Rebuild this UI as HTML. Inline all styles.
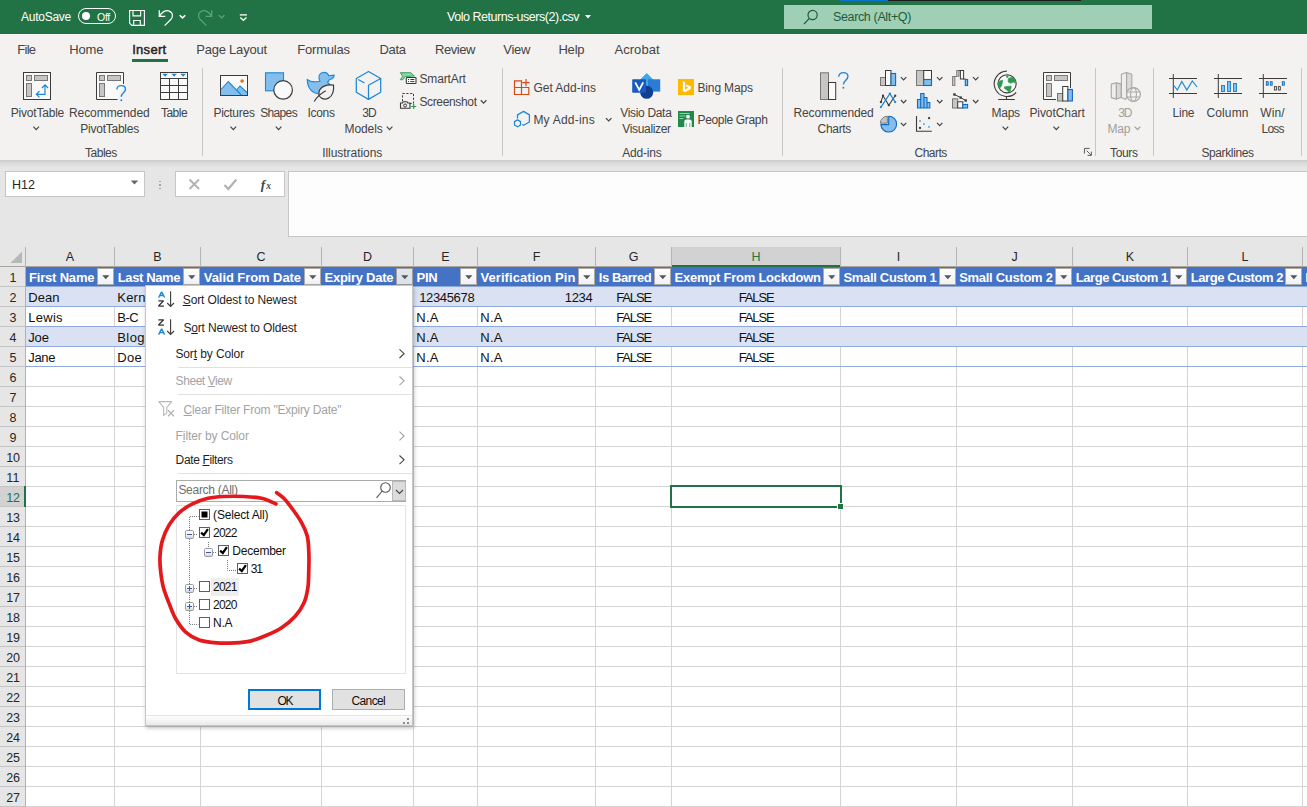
<!DOCTYPE html>
<html><head><meta charset="utf-8"><title>Excel</title>
<style>
html,body{margin:0;padding:0;background:#fff;}
#r{position:relative;width:1307px;height:807px;overflow:hidden;background:#fff;font-family:"Liberation Sans", sans-serif;}
#r div,#r span,#r svg{position:absolute;}
#r span{white-space:pre;}
#r u{text-decoration:underline;text-underline-offset:1px;}
</style></head><body><div id="r">
<div style="left:0px;top:0px;width:1307px;height:34px;background:#217346;"></div>
<div style="left:0px;top:34px;width:1307px;height:127px;background:#f3f2f1;"></div>
<div style="left:0px;top:33px;width:1307px;height:1px;background:#1f6e42;"></div>
<div style="left:0px;top:34px;width:1307px;height:1px;background:#fbfbfa;"></div>
<div style="left:0px;top:160px;width:1307px;height:87px;background:#e6e6e6;"></div>
<div style="left:0px;top:160px;width:1307px;height:8px;background:linear-gradient(#cccbca,#dbdbdb 40%,#e6e6e6);"></div>
<div style="left:840px;top:0px;width:48px;height:1px;background:#0a74cc;"></div>
<div style="left:888px;top:0px;width:193px;height:1px;background:#1c1c1c;"></div>
<span style="left:21.00px;top:9.44px;font-size:12px;line-height:16px;color:#fff;letter-spacing:-0.256px;">AutoSave</span>
<div style="left:78px;top:8px;width:38px;height:16px;border:1px solid #fff;box-sizing:border-box;border-radius:8px;"></div>
<div style="left:82px;top:12px;width:8px;height:8px;background:#fff;border-radius:4px;"></div>
<span style="left:97.00px;top:9.67px;font-size:10.5px;line-height:14.5px;color:#fff;letter-spacing:-0.271px;">Off</span>
<svg style="left:120px;top:0" width="140" height="34" viewBox="120 0 140 34"><g fill="none" stroke="#fff" stroke-width="1.150"><path d="M129.600 10.500h14.800v14.800h-12.600l-2.200-2.200z"/><path d="M133 10.500v5.300h7.600v-5.300"/><path d="M133.700 25.300v-4.800h6.600v4.800"/></g><g fill="none" stroke="#fff" stroke-width="1.250"><path d="M159.300 10.300v6.100h6"/><path d="M159.600 16.100C161.500 12.300 165.500 9.700 169.300 11.100c3.400 1.300 4.300 5 1.700 8.200L164.600 25.600"/></g><path d="M179.700 15.300l2.800 2.600 2.800-2.600" fill="none" stroke="#fff" stroke-width="1.500"/><g fill="none" stroke="#5f9f7d" stroke-width="1.250"><path d="M211.700 10.300v6.100h-6"/><path d="M211.400 16.100C209.500 12.300 205.500 9.700 201.700 11.100c-3.400 1.300-4.300 5-1.700 8.200L206.400 25.600"/></g><path d="M218.900 15.300l2.800 2.600 2.800-2.600" fill="none" stroke="#5f9f7d" stroke-width="1.400"/><path d="M239.800 14.900h7.200" stroke="#fff" stroke-width="1.300"/><path d="M240.300 17.500l3.100 2.700 3.100-2.700" fill="none" stroke="#fff" stroke-width="1.400"/></svg>
<span style="left:447.00px;top:8.99px;font-size:12.5px;line-height:16.5px;color:#fff;letter-spacing:-0.472px;">Volo Returns-users(2).csv</span>
<svg style="left:584px;top:14px;" width="8" height="5" viewBox="0 0 8 5"><path d="M1 1h6l-3 3.4z" fill="#fff"/></svg>
<div style="left:784px;top:5px;width:368px;height:24px;background:#9fcfb5;"></div>
<svg style="left:803px;top:9px;" width="16" height="16" viewBox="0 0 16 16"><g fill="none" stroke="#1e5c3a" stroke-width="1.2"><circle cx="9.6" cy="6" r="4.6"/><path d="M6.4 9.4L1 15"/></g></svg>
<span style="left:833.00px;top:9.19px;font-size:12.5px;line-height:16.5px;color:#1e5c3a;letter-spacing:-0.358px;">Search (Alt+Q)</span>
<span style="left:17.20px;top:41.25px;font-size:13px;line-height:17px;color:#444;letter-spacing:-0.688px;">File</span>
<span style="left:69.20px;top:41.25px;font-size:13px;line-height:17px;color:#444;letter-spacing:-0.097px;">Home</span>
<span style="left:196.20px;top:41.25px;font-size:13px;line-height:17px;color:#444;letter-spacing:-0.211px;">Page Layout</span>
<span style="left:297.30px;top:41.25px;font-size:13px;line-height:17px;color:#444;letter-spacing:-0.223px;">Formulas</span>
<span style="left:379.40px;top:41.25px;font-size:13px;line-height:17px;color:#444;letter-spacing:-0.292px;">Data</span>
<span style="left:435.10px;top:41.25px;font-size:13px;line-height:17px;color:#444;letter-spacing:-0.471px;">Review</span>
<span style="left:503.30px;top:41.25px;font-size:13px;line-height:17px;color:#444;letter-spacing:-0.313px;">View</span>
<span style="left:558.40px;top:41.25px;font-size:13px;line-height:17px;color:#444;letter-spacing:-0.188px;">Help</span>
<span style="left:614.40px;top:41.25px;font-size:13px;line-height:17px;color:#444;letter-spacing:0.070px;">Acrobat</span>
<span style="left:132.20px;top:41.25px;font-size:13px;line-height:17px;color:#252525;letter-spacing:0.297px;-webkit-text-stroke:0.45px #252525;">Insert</span>
<div style="left:132px;top:59px;width:36px;height:3px;background:#217346;"></div>
<div style="left:202px;top:68px;width:1px;height:88px;background:#c8c6c4;"></div>
<div style="left:502px;top:68px;width:1px;height:88px;background:#c8c6c4;"></div>
<div style="left:782px;top:68px;width:1px;height:88px;background:#c8c6c4;"></div>
<div style="left:1095px;top:68px;width:1px;height:88px;background:#c8c6c4;"></div>
<div style="left:1153px;top:68px;width:1px;height:88px;background:#c8c6c4;"></div>
<div style="left:1301px;top:68px;width:1px;height:88px;background:#c8c6c4;"></div>
<svg style="left:0;top:64px" width="1307" height="100" viewBox="0 64 1307 100"><rect x="23.5" y="72.5" width="27" height="27" fill="#fafafa" stroke="#3b3b3b" stroke-width="1"/><rect x="26.5" y="75.5" width="5" height="5" fill="#c8c6c4" stroke="#797775" stroke-width="1"/><rect x="34.5" y="75.5" width="13" height="5" fill="#c8c6c4" stroke="#797775" stroke-width="1"/><rect x="26.5" y="83.5" width="5" height="13" fill="#c8c6c4" stroke="#797775" stroke-width="1"/><path d="M36.3 94.3H45V84.8M39.5 91.2L36.3 94.3L39.5 97.4M41.9 88L45 84.8L48.1 88" fill="none" stroke="#1e88d4" stroke-width="1.2"/><path d="M33.40 126.65L36.20 129.55L39.00 126.65" fill="none" stroke="#444" stroke-width="1.2"/><path d="M117.5 99.5H96.5V72.5H123.5V84" fill="#fafafa" stroke="#3b3b3b" stroke-width="1"/><rect x="99.5" y="75.5" width="5" height="5" fill="#c8c6c4" stroke="#797775" stroke-width="1"/><rect x="107.5" y="75.5" width="13" height="5" fill="#c8c6c4" stroke="#797775" stroke-width="1"/><rect x="99.5" y="83.5" width="5" height="13" fill="#c8c6c4" stroke="#797775" stroke-width="1"/><path d="M116.8 89.5c.2-2.6 2.2-3.9 4.4-3.9 2.5 0 4.3 1.5 4.3 3.7 0 3.2-4.2 3.6-4.2 7.4" fill="none" stroke="#1e88d4" stroke-width="1.4"/><circle cx="121.3" cy="100.2" r="1" fill="#1e88d4"/><rect x="160.5" y="72.5" width="27" height="27" fill="#fafafa" stroke="#3b3b3b"/><path d="M160.5 78.5h27M160.5 85.5h27M160.5 92.5h27M169.5 78.5v21M178.5 78.5v21" stroke="#3b3b3b" fill="none"/><path d="M162.300 73.800h5.600l-2.800 3zM171.300 73.800h5.600l-2.800 3zM180.300 73.800h5.600l-2.800 3z" fill="#1e88d4"/><rect x="220.5" y="75.5" width="27" height="20" fill="#fafafa" stroke="#3b3b3b"/><path d="M221 89.5L228.3 81.5L236.5 90L240 86L247 92.5V95H221z" fill="#83beec"/><path d="M221 89.5L228.3 81.5L241.3 95M236.5 90L240 86L247 92.5" fill="none" stroke="#1e88d4" stroke-width="1.1"/><circle cx="242.1" cy="81" r="1.8" fill="#e8710a"/><path d="M230.50 126.65L233.30 129.55L236.10 126.65" fill="none" stroke="#444" stroke-width="1.2"/><rect x="265.5" y="72.8" width="18" height="18" fill="#83beec" stroke="#1e88d4" stroke-width="1.1"/><circle cx="283.1" cy="89.9" r="9.3" fill="#fafafa" stroke="#3b3b3b" stroke-width="1.2"/><path d="M275.80 126.65L278.60 129.55L281.40 126.65" fill="none" stroke="#444" stroke-width="1.2"/><path d="M307.200 79.300C309.500 81.500 314.500 82.300 320 81.200C319.300 80.100 319 78.800 319 77.300A5 5 0 0 1 328.700 75.700L334.200 75.100C334.100 77.700 332.500 79.300 329.300 79.700C328.900 80.700 328.300 81.500 327.500 82.200C329.500 83.500 330.600 85.500 330.600 87.500C330.600 91.500 326.500 93.900 320.500 93.900C312.500 93.900 307.300 88.500 307.200 79.300z" fill="#83beec" stroke="#1e88d4" stroke-width="1.100" stroke-linejoin="round"/><path d="M333.500 85.100c-5.500-.6-11.200 1-13.600 4.600c-2.300 3.500-.8 7.300 2.100 8.700c4.200 2 9.400-.8 10.900-5.800c.8-2.500 .9-5 .6-7.500z" fill="#f3f2f1" stroke="#3b3b3b" stroke-width="1.200"/><path d="M314.200 101.500c2.500-4.300 6.300-8 11.600-10.800" fill="none" stroke="#3b3b3b" stroke-width="1.200"/><path d="M368.5 71.5L380.7 78.5V92.3L368.5 99.400L356.300 92.300V78.500zM368.500 99.400V85.300L380.700 78.500M364.500 83L358.200 79.500" fill="none" stroke="#1e88d4" stroke-width="1.25" stroke-linejoin="round"/><path d="M386.80 126.65L389.60 129.55L392.40 126.65" fill="none" stroke="#444" stroke-width="1.2"/><path d="M400.300 72.700h10.500l3.600 3.400h-3l-.2 .3h-6l-2.300 3.300h-2.600l2.400-3.400z" fill="#8fd3a8" stroke="#2e9a55" stroke-width=".9" stroke-linejoin="round"/><rect x="406.300" y="77.500" width="9.700" height="6" rx=".8" fill="#fafafa" stroke="#3b3b3b" stroke-width="1.1"/><path d="M408 79.500h1M410.300 79.500h4M408 81.600h1M410.300 81.600h4" stroke="#3b3b3b" stroke-width="1"/><rect x="402.500" y="93.500" width="11" height="10" fill="none" stroke="#3b3b3b" stroke-width="1" stroke-dasharray="2.200 1.600"/><path d="M400.500 103h2l.8-1.200h3.600l.8 1.200h2.300v5.300h-9.500z" fill="#f3f2f1" stroke="#3b3b3b" stroke-width="1.100"/><circle cx="405.100" cy="105.500" r="1.500" fill="none" stroke="#3b3b3b" stroke-width="1"/><path d="M411.200 106.500h5M413.700 104v5" stroke="#2a9a4a" stroke-width="1.200"/><path d="M480.80 100.25L483.60 103.15L486.40 100.25" fill="none" stroke="#444" stroke-width="1.2"/><path d="M514.500 80.800h7v13.700h-7zM514.500 87.500h14.300v7h-7.300" fill="none" stroke="#d64a17" stroke-width="1.200"/><path d="M522.300 82.700h7.300M526 79v7.300" stroke="#d64a17" stroke-width="1.200"/><path d="M517.500 118.600V114.900L523.600 111.400L529.400 114.900V122L523.600 125.300L522.200 124.500" fill="none" stroke="#1e88d4" stroke-width="1.250" stroke-linejoin="round"/><path d="M517.500 119.900l3 1.750v3.400l-3 1.750l-3-1.750v-3.400z" fill="none" stroke="#1e88d4" stroke-width="1.250" stroke-linejoin="round"/><path d="M605.90 118.05L608.70 120.95L611.50 118.05" fill="none" stroke="#444" stroke-width="1.2"/><path d="M646.700 73l8 8-8 8-8-8z" fill="#41a5ee"/><rect x="648" y="79.300" width="12.200" height="12.300" fill="#2b7cd3"/><circle cx="646.700" cy="92.300" r="6.500" fill="#103f91"/><rect x="632.200" y="79.300" width="13.800" height="13.500" rx=".8" fill="#185abd"/><path d="M635.200 82.300l4 7.600 4-7.600" fill="none" stroke="#fff" stroke-width="1.800" stroke-linejoin="miter"/><rect x="678" y="79" width="16" height="16" fill="#ffb900"/><path d="M682.800 81.200l2.300 .8v7.600l3.200-1.900-1.600-.7-1-2.500 5.100 1.800v2.600l-5.700 3.300-2.300-1.300z" fill="#fff"/><rect x="678" y="111" width="16" height="16" fill="#1f8a4c"/><path d="M679.500 113.500h10M679.500 116h6M679.500 118.500h4" stroke="#8fd0a8" stroke-width="1.200"/><circle cx="688" cy="116.700" r="1.900" fill="#fff"/><path d="M684.300 127v-5.300c0-1.300 1-2.200 2.200-2.200h3c1.200 0 2.200 .9 2.200 2.200V127z" fill="#fff"/><path d="M686.200 127v-4M689.800 127v-4" stroke="#1f8a4c" stroke-width=".7"/><rect x="820.500" y="72.800" width="8" height="26.700" fill="#c8c6c4" stroke="#797775"/><rect x="828.500" y="82.500" width="7.200" height="17" fill="#fafafa" stroke="#3b3b3b"/><path d="M838.700 76.800c.3-2.800 2.300-4.200 4.700-4.200 2.700 0 4.500 1.600 4.500 3.900 0 3.500-4.500 4-4.500 8" fill="none" stroke="#1e88d4" stroke-width="1.400"/><circle cx="843.400" cy="87.800" r="1" fill="#1e88d4"/><rect x="880.500" y="77.500" width="5" height="8" fill="#c8c6c4" stroke="#797775"/><rect x="885.500" y="70.500" width="5.500" height="15" fill="#fafafa" stroke="#3b3b3b"/><rect x="891" y="73.500" width="4.600" height="12" fill="#83beec" stroke="#0f6cbd" stroke-width="1.100"/><path d="M900.90 77.10L903.60 79.90L906.30 77.10" fill="none" stroke="#444" stroke-width="1.2"/><rect x="916.500" y="70.500" width="7.200" height="15" fill="#c8c6c4" stroke="#797775"/><rect x="923.700" y="70.500" width="7.800" height="9" fill="#fafafa" stroke="#3b3b3b"/><rect x="923.700" y="79.500" width="7.800" height="6" fill="#83beec" stroke="#0f6cbd" stroke-width="1.100"/><path d="M937.00 77.10L939.70 79.90L942.40 77.10" fill="none" stroke="#444" stroke-width="1.2"/><rect x="952.600" y="76.500" width="2.300" height="9" fill="#c8c6c4" stroke="#797775" stroke-width=".9"/><rect x="956.700" y="70.500" width="2.300" height="5.700" fill="#c8c6c4" stroke="#797775" stroke-width=".9"/><path d="M955 76.500h2" stroke="#797775" stroke-width=".9"/><rect x="960.400" y="70.500" width="3.200" height="8.500" fill="#fafafa" stroke="#3b3b3b"/><path d="M959 70.500h1.500M963.500 79h2" stroke="#3b3b3b"/><rect x="965.300" y="79.500" width="2.300" height="6" fill="#83beec" stroke="#0f6cbd" stroke-width="1.100"/><path d="M973.00 77.10L975.70 79.90L978.40 77.10" fill="none" stroke="#444" stroke-width="1.2"/><path d="M880.900 102.100L883 95.700L888.800 105.200L895.200 95.700" fill="none" stroke="#3b3b3b" stroke-width="1.100"/><path d="M880.900 107.100L889.900 93.600L895.200 102.100" fill="none" stroke="#1e88d4" stroke-width="1.200"/><rect x="879.9" y="101.1" width="2" height="2" fill="#3b3b3b"/><rect x="882.0" y="94.7" width="2" height="2" fill="#3b3b3b"/><rect x="887.8" y="104.2" width="2" height="2" fill="#3b3b3b"/><rect x="894.2" y="94.7" width="2" height="2" fill="#3b3b3b"/><circle cx="880.9" cy="107.1" r="1.150" fill="#1e88d4"/><circle cx="889.9" cy="93.6" r="1.150" fill="#1e88d4"/><circle cx="895.2" cy="102.1" r="1.150" fill="#1e88d4"/><path d="M900.90 100.00L903.60 102.80L906.30 100.00" fill="none" stroke="#444" stroke-width="1.2"/><path d="M917.500 108v-8.500h3.200v8.500zM920.700 108v-14.500h3.300v14.500zM924 108v-10.500h3v10.500zM927 108v-5.500h2.800v5.500z" fill="#83beec" stroke="#0f6cbd" stroke-width="1.100"/><path d="M937.00 100.00L939.70 102.80L942.40 100.00" fill="none" stroke="#444" stroke-width="1.2"/><rect x="952.500" y="98.800" width="5.200" height="9.200" fill="#c8c6c4" stroke="#797775"/><rect x="957.700" y="101.800" width="5.100" height="6.200" fill="#fafafa" stroke="#3b3b3b"/><rect x="962.800" y="104.500" width="4.800" height="3.500" fill="#83beec" stroke="#0f6cbd" stroke-width="1.100"/><path d="M954.400 94.500L960.700 97.600L965.700 100.500" stroke="#3b3b3b" stroke-width="1" fill="none"/><rect x="953.2" y="93.3" width="2.400" height="2.400" fill="#3b3b3b"/><rect x="959.5" y="96.4" width="2.400" height="2.400" fill="#3b3b3b"/><rect x="964.5" y="99.3" width="2.400" height="2.400" fill="#3b3b3b"/><path d="M973.00 100.00L975.70 102.80L978.40 100.00" fill="none" stroke="#444" stroke-width="1.2"/><path d="M888.700 116.200a7.900 7.900 0 1 1-7.900 8.400h7.900z" fill="#83beec" stroke="#0f6cbd" stroke-width="1.100" stroke-linejoin="round"/><path d="M887.300 123.200v-7a7.300 7.300 0 0 0-7 7z" fill="#c8c6c4" stroke="#797775"/><path d="M900.90 122.80L903.60 125.60L906.30 122.80" fill="none" stroke="#444" stroke-width="1.2"/><path d="M916.500 116v15.300h15.300" fill="none" stroke="#3b3b3b" stroke-width="1.100"/><rect x="928.100" y="117.100" width="2" height="2" fill="#3b3b3b"/><rect x="919" y="126.900" width="2" height="2" fill="#3b3b3b"/><rect x="919.100" y="120" width="1.900" height="1.900" fill="#6fb4ea"/><rect x="923" y="123.100" width="1.900" height="1.900" fill="#6fb4ea"/><rect x="928" y="125.900" width="1.900" height="1.900" fill="#6fb4ea"/><path d="M937.00 122.80L939.70 125.60L942.40 122.80" fill="none" stroke="#444" stroke-width="1.2"/><circle cx="1007.100" cy="83.800" r="9.100" fill="#fafafa" stroke="#3b3b3b" stroke-width="1.100"/><path d="M998.400 81.400L1002.600 80.100L1002.400 82.400L1001.600 85.800L999.900 88.100L998.700 86.800L997.900 84.300zM1008.300 78.400L1011.300 77.200L1014.300 78.400L1015.900 81.900L1015.500 83.300L1013.300 82.100L1010.800 83.300L1008.100 81.900zM1006.600 75.700L1008.400 75.700L1007.800 77.500L1006.400 77.200zM1004.400 86.800L1011.300 86.100L1010.800 89.300L1009.600 92.500L1006.900 90.300L1004.600 88.600z" fill="#2f9a4f" stroke="#2f9a4f" stroke-width=".6" stroke-linejoin="round"/><path d="M1006.900 71.100A12.700 12.700 0 1 0 1016.200 92.500" fill="none" stroke="#3b3b3b" stroke-width="1.100"/><path d="M1006.500 96.400v3.100M998.200 99.500h16.600" stroke="#3b3b3b" stroke-width="1.100"/><path d="M1002.60 126.65L1005.40 129.55L1008.20 126.65" fill="none" stroke="#444" stroke-width="1.2"/><path d="M1056 99.500H1043.500V72.500H1070.500V88" fill="#fafafa" stroke="#3b3b3b"/><rect x="1046.500" y="75.500" width="5" height="5" fill="#c8c6c4" stroke="#797775"/><rect x="1054.500" y="75.500" width="13" height="5" fill="#c8c6c4" stroke="#797775"/><rect x="1046.500" y="83.500" width="5" height="13" fill="#c8c6c4" stroke="#797775"/><rect x="1057.500" y="93.500" width="5.500" height="7.500" fill="#c8c6c4" stroke="#797775"/><rect x="1062.700" y="86.500" width="5.200" height="14.500" fill="#fafafa" stroke="#3b3b3b"/><rect x="1067.900" y="89.500" width="4.500" height="11.500" fill="#83beec" stroke="#1565c0" stroke-width="1.100"/><path d="M1053.50 126.65L1056.30 129.55L1059.10 126.65" fill="none" stroke="#444" stroke-width="1.2"/><path d="M1084.400 153.600v-5.200h5.200M1086.600 150.600l4.500 4.500M1091.400 151.600v3.800h-3.800" fill="none" stroke="#605e5c" stroke-width="1"/><path d="M1111.300 84.100L1116.400 82.700V99.100L1111.300 97.600z" fill="#efeeed" stroke="#a9a8a7" stroke-width="1.100" stroke-linejoin="round"/><path d="M1116.400 82.700L1121.200 84.100V97.600L1116.400 99.100z" fill="#dad9d8" stroke="#a9a8a7" stroke-width="1.100" stroke-linejoin="round"/><path d="M1121.400 74.200L1126.600 72.500V98L1125.600 99.400L1121.400 97.600z" fill="#efeeed" stroke="#a9a8a7" stroke-width="1.100" stroke-linejoin="round"/><path d="M1126.600 72.500L1131.800 74.200V90H1126.600z" fill="#dad9d8" stroke="#a9a8a7" stroke-width="1.100" stroke-linejoin="round"/><circle cx="1133.500" cy="94.500" r="6.900" fill="#f3f2f1" stroke="#a9a8a7" stroke-width="1.200"/><ellipse cx="1133.500" cy="94.500" rx="2.900" ry="6.900" fill="none" stroke="#a9a8a7" stroke-width="1.100"/><path d="M1127.200 92h12.600M1127.200 97h12.600" stroke="#a9a8a7" stroke-width="1.100" fill="none"/><path d="M1134.70 126.65L1137.50 129.55L1140.30 126.65" fill="none" stroke="#a19f9d" stroke-width="1.2"/><path d="M1169 78.500h28M1169 93.500h28M1173.3 74v24" stroke="#3b3b3b" stroke-width="1" fill="none"/><path d="M1173.800 85.500l3.500 4.500 4.500-8.500 5 8.500 5.500-9 4.700 6" fill="none" stroke="#1e88d4" stroke-width="1.200"/><path d="M1214 78.500h28M1214 93.500h28M1218.3 74v24" stroke="#3b3b3b" stroke-width="1" fill="none"/><rect x="1221.500" y="85.500" width="3" height="6" fill="#83beec" stroke="#1e88d4"/><rect x="1227.500" y="81.500" width="3" height="10" fill="#83beec" stroke="#1e88d4"/><rect x="1233.500" y="83.500" width="3" height="8" fill="#83beec" stroke="#1e88d4"/><path d="M1259 78.500h28M1259 93.500h28M1263.3 74v24" stroke="#3b3b3b" stroke-width="1" fill="none"/><rect x="1266.300" y="81.700" width="1.900" height="3.500" fill="#83beec" stroke="#0f6cbd" stroke-width=".9"/><rect x="1270.300" y="81.700" width="1.900" height="3.500" fill="#83beec" stroke="#0f6cbd" stroke-width=".9"/><rect x="1274.400" y="86.600" width="2" height="3.400" fill="#f3f2f1" stroke="#3b3b3b" stroke-width=".9"/><rect x="1278.300" y="86.600" width="2" height="3.400" fill="#f3f2f1" stroke="#3b3b3b" stroke-width=".9"/><rect x="1282.300" y="81.700" width="2" height="3.500" fill="#83beec" stroke="#0f6cbd" stroke-width=".9"/></svg>
<span style="left:10.70px;top:104.64px;font-size:12px;line-height:16px;color:#444;letter-spacing:-0.198px;">PivotTable</span>
<span style="left:68.90px;top:104.64px;font-size:12px;line-height:16px;color:#444;letter-spacing:-0.052px;">Recommended</span>
<span style="left:80.30px;top:120.64px;font-size:12px;line-height:16px;color:#444;letter-spacing:-0.252px;">PivotTables</span>
<span style="left:160.90px;top:104.64px;font-size:12px;line-height:16px;color:#444;letter-spacing:-0.498px;">Table</span>
<span style="left:213.40px;top:104.64px;font-size:12px;line-height:16px;color:#444;letter-spacing:-0.257px;">Pictures</span>
<span style="left:260.20px;top:104.64px;font-size:12px;line-height:16px;color:#444;letter-spacing:-0.651px;">Shapes</span>
<span style="left:307.40px;top:104.64px;font-size:12px;line-height:16px;color:#444;letter-spacing:-0.258px;">Icons</span>
<span style="left:362.30px;top:104.64px;font-size:12px;line-height:16px;color:#444;letter-spacing:-1.072px;">3D</span>
<span style="left:344.60px;top:120.64px;font-size:12px;line-height:16px;color:#444;letter-spacing:-0.115px;">Models</span>
<span style="left:419.40px;top:71.14px;font-size:12px;line-height:16px;color:#444;letter-spacing:-0.118px;">SmartArt</span>
<span style="left:419.40px;top:94.14px;font-size:12px;line-height:16px;color:#444;letter-spacing:-0.340px;">Screenshot</span>
<span style="left:533.40px;top:79.84px;font-size:12px;line-height:16px;color:#444;letter-spacing:-0.009px;">Get Add-ins</span>
<span style="left:533.40px;top:111.54px;font-size:12px;line-height:16px;color:#444;letter-spacing:0.224px;">My Add-ins</span>
<span style="left:620.20px;top:105.14px;font-size:12px;line-height:16px;color:#444;letter-spacing:-0.318px;">Visio Data</span>
<span style="left:622.30px;top:121.14px;font-size:12px;line-height:16px;color:#444;letter-spacing:-0.341px;">Visualizer</span>
<span style="left:697.50px;top:79.94px;font-size:12px;line-height:16px;color:#444;letter-spacing:-0.156px;">Bing Maps</span>
<span style="left:697.50px;top:111.64px;font-size:12px;line-height:16px;color:#444;letter-spacing:-0.339px;">People Graph</span>
<span style="left:793.40px;top:104.64px;font-size:12px;line-height:16px;color:#444;letter-spacing:-0.098px;">Recommended</span>
<span style="left:817.60px;top:120.64px;font-size:12px;line-height:16px;color:#444;letter-spacing:-0.324px;">Charts</span>
<span style="left:991.60px;top:104.64px;font-size:12px;line-height:16px;color:#444;letter-spacing:-0.286px;">Maps</span>
<span style="left:1029.40px;top:104.64px;font-size:12px;line-height:16px;color:#444;letter-spacing:-0.073px;">PivotChart</span>
<span style="left:1172.50px;top:104.94px;font-size:12px;line-height:16px;color:#444;letter-spacing:-0.222px;">Line</span>
<span style="left:1206.40px;top:104.94px;font-size:12px;line-height:16px;color:#444;letter-spacing:0.140px;">Column</span>
<span style="left:1260.30px;top:104.94px;font-size:12px;line-height:16px;color:#444;letter-spacing:0.125px;">Win/</span>
<span style="left:1261.50px;top:120.94px;font-size:12px;line-height:16px;color:#444;letter-spacing:-0.765px;">Loss</span>
<span style="left:1118.20px;top:104.94px;font-size:12px;line-height:16px;color:#a19f9d;letter-spacing:-1.072px;">3D</span>
<span style="left:1107.60px;top:120.94px;font-size:12px;line-height:16px;color:#a19f9d;letter-spacing:-0.248px;">Map</span>
<span style="left:85.10px;top:144.54px;font-size:12px;line-height:16px;color:#444;letter-spacing:-0.515px;">Tables</span>
<span style="left:322.20px;top:144.54px;font-size:12px;line-height:16px;color:#444;letter-spacing:-0.046px;">Illustrations</span>
<span style="left:622.20px;top:144.54px;font-size:12px;line-height:16px;color:#444;letter-spacing:-0.184px;">Add-ins</span>
<span style="left:914.60px;top:144.54px;font-size:12px;line-height:16px;color:#444;letter-spacing:-0.541px;">Charts</span>
<span style="left:1110.10px;top:144.54px;font-size:12px;line-height:16px;color:#444;letter-spacing:-0.389px;">Tours</span>
<span style="left:1201.40px;top:144.54px;font-size:12px;line-height:16px;color:#444;letter-spacing:-0.373px;">Sparklines</span>
<div style="left:5px;top:171px;width:140px;height:26px;background:#fff;border:1px solid #c6c6c6;box-sizing:border-box;"></div>
<span style="left:12.10px;top:177.19px;font-size:12.5px;line-height:16.5px;color:#262626;letter-spacing:-0.079px;">H12</span>
<svg style="left:130px;top:180px;" width="9" height="5" viewBox="0 0 9 5"><path d="M.8 .6h7.400l-3.700 3.800z" fill="#666"/></svg>
<div style="left:159.2px;top:180.5px;width:1.6px;height:1.6px;background:#a6a6a6;"></div>
<div style="left:159.2px;top:184px;width:1.6px;height:1.6px;background:#a6a6a6;"></div>
<div style="left:159.2px;top:187.5px;width:1.6px;height:1.6px;background:#a6a6a6;"></div>
<div style="left:175px;top:171px;width:110px;height:26px;background:#fff;border:1px solid #c6c6c6;box-sizing:border-box;"></div>
<svg style="left:188px;top:178px;" width="13" height="13" viewBox="0 0 13 13"><path d="M1.500 1.500l9.500 9.500M11 1.500l-9.500 9.500" stroke="#b2b2b2" stroke-width="1.900" fill="none"/></svg>
<svg style="left:223px;top:178px;" width="15" height="13" viewBox="0 0 15 13"><path d="M1.500 7l3.800 4 8-9.500" stroke="#b2b2b2" stroke-width="2.200" fill="none"/></svg>
<span style="left:260.80px;top:176.01px;font-size:13.5px;line-height:17.5px;color:#444;font-weight:700;font-style:italic;font-family:'Liberation Serif',serif;">f</span>
<span style="left:266.30px;top:180.16px;font-size:9.5px;line-height:13.5px;color:#444;font-weight:700;font-style:italic;font-family:'Liberation Serif',serif;">x</span>
<div style="left:288px;top:171px;width:1021px;height:66px;background:#fdfdfd;border:1px solid #c6c6c6;box-sizing:border-box;"></div>
<div style="left:0px;top:247px;width:1307px;height:560px;background:#fff;"></div>
<div style="left:0px;top:247px;width:1307px;height:20px;background:#e6e6e6;"></div>
<div style="left:0px;top:266px;width:1307px;height:1px;background:#aba59f;"></div>
<div style="left:672px;top:247px;width:168px;height:19px;background:#d2d2d2;"></div>
<div style="left:671px;top:265px;width:170px;height:2px;background:#217346;"></div>
<div style="left:25px;top:247px;width:1px;height:20px;background:#b4b4b4;"></div>
<span style="left:65.83px;top:249.09px;font-size:12.5px;line-height:16.5px;color:#262626;">A</span>
<div style="left:114px;top:247px;width:1px;height:20px;background:#b4b4b4;"></div>
<span style="left:153.33px;top:249.09px;font-size:12.5px;line-height:16.5px;color:#262626;">B</span>
<div style="left:200px;top:247px;width:1px;height:20px;background:#b4b4b4;"></div>
<span style="left:256.48px;top:249.09px;font-size:12.5px;line-height:16.5px;color:#262626;">C</span>
<div style="left:321px;top:247px;width:1px;height:20px;background:#b4b4b4;"></div>
<span style="left:362.98px;top:249.09px;font-size:12.5px;line-height:16.5px;color:#262626;">D</span>
<div style="left:413px;top:247px;width:1px;height:20px;background:#b4b4b4;"></div>
<span style="left:441.33px;top:249.09px;font-size:12.5px;line-height:16.5px;color:#262626;">E</span>
<div style="left:477px;top:247px;width:1px;height:20px;background:#b4b4b4;"></div>
<span style="left:532.68px;top:249.09px;font-size:12.5px;line-height:16.5px;color:#262626;">F</span>
<div style="left:595px;top:247px;width:1px;height:20px;background:#b4b4b4;"></div>
<span style="left:628.63px;top:249.09px;font-size:12.5px;line-height:16.5px;color:#262626;">G</span>
<div style="left:671px;top:247px;width:1px;height:20px;background:#b4b4b4;"></div>
<span style="left:751.48px;top:249.09px;font-size:12.5px;line-height:16.5px;color:#217346;">H</span>
<div style="left:840px;top:247px;width:1px;height:20px;background:#b4b4b4;"></div>
<span style="left:896.76px;top:249.09px;font-size:12.5px;line-height:16.5px;color:#262626;">I</span>
<div style="left:956px;top:247px;width:1px;height:20px;background:#b4b4b4;"></div>
<span style="left:1011.38px;top:249.09px;font-size:12.5px;line-height:16.5px;color:#262626;">J</span>
<div style="left:1072px;top:247px;width:1px;height:20px;background:#b4b4b4;"></div>
<span style="left:1125.83px;top:249.09px;font-size:12.5px;line-height:16.5px;color:#262626;">K</span>
<div style="left:1187px;top:247px;width:1px;height:20px;background:#b4b4b4;"></div>
<span style="left:1241.52px;top:249.09px;font-size:12.5px;line-height:16.5px;color:#262626;">L</span>
<div style="left:1302px;top:247px;width:1px;height:20px;background:#b4b4b4;"></div>
<svg style="left:10px;top:251px;" width="13" height="13" viewBox="0 0 13 13"><path d="M12 .5v11.500h-11.500z" fill="#b8b8b8"/></svg>
<div style="left:0px;top:267px;width:25px;height:540px;background:#e6e6e6;"></div>
<div style="left:25px;top:267px;width:1px;height:540px;background:#b1b1b1;"></div>
<div style="left:114px;top:267px;width:1px;height:540px;background:#d4d4d4;"></div>
<div style="left:200px;top:267px;width:1px;height:540px;background:#d4d4d4;"></div>
<div style="left:321px;top:267px;width:1px;height:540px;background:#d4d4d4;"></div>
<div style="left:413px;top:267px;width:1px;height:540px;background:#d4d4d4;"></div>
<div style="left:477px;top:267px;width:1px;height:540px;background:#d4d4d4;"></div>
<div style="left:595px;top:267px;width:1px;height:540px;background:#d4d4d4;"></div>
<div style="left:671px;top:267px;width:1px;height:540px;background:#d4d4d4;"></div>
<div style="left:840px;top:267px;width:1px;height:540px;background:#d4d4d4;"></div>
<div style="left:956px;top:267px;width:1px;height:540px;background:#d4d4d4;"></div>
<div style="left:1072px;top:267px;width:1px;height:540px;background:#d4d4d4;"></div>
<div style="left:1187px;top:267px;width:1px;height:540px;background:#d4d4d4;"></div>
<div style="left:1302px;top:267px;width:1px;height:540px;background:#d4d4d4;"></div>
<div style="left:26px;top:286px;width:1281px;height:1px;background:#d4d4d4;"></div>
<div style="left:0px;top:286px;width:25px;height:1px;background:#c4c4c4;"></div>
<span style="left:9.53px;top:269.59px;font-size:12.5px;line-height:16.5px;color:#262626;letter-spacing:-0.203px;">1</span>
<div style="left:26px;top:306px;width:1281px;height:1px;background:#d4d4d4;"></div>
<div style="left:0px;top:306px;width:25px;height:1px;background:#c4c4c4;"></div>
<span style="left:9.53px;top:289.59px;font-size:12.5px;line-height:16.5px;color:#262626;letter-spacing:-0.203px;">2</span>
<div style="left:26px;top:326px;width:1281px;height:1px;background:#d4d4d4;"></div>
<div style="left:0px;top:326px;width:25px;height:1px;background:#c4c4c4;"></div>
<span style="left:9.53px;top:309.59px;font-size:12.5px;line-height:16.5px;color:#262626;letter-spacing:-0.203px;">3</span>
<div style="left:26px;top:346px;width:1281px;height:1px;background:#d4d4d4;"></div>
<div style="left:0px;top:346px;width:25px;height:1px;background:#c4c4c4;"></div>
<span style="left:9.53px;top:329.59px;font-size:12.5px;line-height:16.5px;color:#262626;letter-spacing:-0.203px;">4</span>
<div style="left:26px;top:366px;width:1281px;height:1px;background:#d4d4d4;"></div>
<div style="left:0px;top:366px;width:25px;height:1px;background:#c4c4c4;"></div>
<span style="left:9.53px;top:349.59px;font-size:12.5px;line-height:16.5px;color:#262626;letter-spacing:-0.203px;">5</span>
<div style="left:26px;top:386px;width:1281px;height:1px;background:#d4d4d4;"></div>
<div style="left:0px;top:386px;width:25px;height:1px;background:#c4c4c4;"></div>
<span style="left:9.53px;top:369.59px;font-size:12.5px;line-height:16.5px;color:#262626;letter-spacing:-0.203px;">6</span>
<div style="left:26px;top:406px;width:1281px;height:1px;background:#d4d4d4;"></div>
<div style="left:0px;top:406px;width:25px;height:1px;background:#c4c4c4;"></div>
<span style="left:9.53px;top:389.59px;font-size:12.5px;line-height:16.5px;color:#262626;letter-spacing:-0.203px;">7</span>
<div style="left:26px;top:426px;width:1281px;height:1px;background:#d4d4d4;"></div>
<div style="left:0px;top:426px;width:25px;height:1px;background:#c4c4c4;"></div>
<span style="left:9.53px;top:409.59px;font-size:12.5px;line-height:16.5px;color:#262626;letter-spacing:-0.203px;">8</span>
<div style="left:26px;top:446px;width:1281px;height:1px;background:#d4d4d4;"></div>
<div style="left:0px;top:446px;width:25px;height:1px;background:#c4c4c4;"></div>
<span style="left:9.53px;top:429.59px;font-size:12.5px;line-height:16.5px;color:#262626;letter-spacing:-0.203px;">9</span>
<div style="left:26px;top:466px;width:1281px;height:1px;background:#d4d4d4;"></div>
<div style="left:0px;top:466px;width:25px;height:1px;background:#c4c4c4;"></div>
<span style="left:6.15px;top:449.59px;font-size:12.5px;line-height:16.5px;color:#262626;letter-spacing:-0.203px;">10</span>
<div style="left:26px;top:486px;width:1281px;height:1px;background:#d4d4d4;"></div>
<div style="left:0px;top:486px;width:25px;height:1px;background:#c4c4c4;"></div>
<span style="left:6.15px;top:469.59px;font-size:12.5px;line-height:16.5px;color:#262626;letter-spacing:0.258px;">11</span>
<div style="left:26px;top:506px;width:1281px;height:1px;background:#d4d4d4;"></div>
<div style="left:0px;top:506px;width:25px;height:1px;background:#c4c4c4;"></div>
<div style="left:0px;top:487px;width:25px;height:19px;background:#d2d2d2;"></div>
<div style="left:24px;top:486px;width:2px;height:21px;background:#217346;"></div>
<span style="left:6.15px;top:489.59px;font-size:12.5px;line-height:16.5px;color:#217346;letter-spacing:-0.203px;">12</span>
<div style="left:26px;top:526px;width:1281px;height:1px;background:#d4d4d4;"></div>
<div style="left:0px;top:526px;width:25px;height:1px;background:#c4c4c4;"></div>
<span style="left:6.15px;top:509.59px;font-size:12.5px;line-height:16.5px;color:#262626;letter-spacing:-0.203px;">13</span>
<div style="left:26px;top:546px;width:1281px;height:1px;background:#d4d4d4;"></div>
<div style="left:0px;top:546px;width:25px;height:1px;background:#c4c4c4;"></div>
<span style="left:6.15px;top:529.59px;font-size:12.5px;line-height:16.5px;color:#262626;letter-spacing:-0.203px;">14</span>
<div style="left:26px;top:566px;width:1281px;height:1px;background:#d4d4d4;"></div>
<div style="left:0px;top:566px;width:25px;height:1px;background:#c4c4c4;"></div>
<span style="left:6.15px;top:549.59px;font-size:12.5px;line-height:16.5px;color:#262626;letter-spacing:-0.203px;">15</span>
<div style="left:26px;top:586px;width:1281px;height:1px;background:#d4d4d4;"></div>
<div style="left:0px;top:586px;width:25px;height:1px;background:#c4c4c4;"></div>
<span style="left:6.15px;top:569.59px;font-size:12.5px;line-height:16.5px;color:#262626;letter-spacing:-0.203px;">16</span>
<div style="left:26px;top:606px;width:1281px;height:1px;background:#d4d4d4;"></div>
<div style="left:0px;top:606px;width:25px;height:1px;background:#c4c4c4;"></div>
<span style="left:6.15px;top:589.59px;font-size:12.5px;line-height:16.5px;color:#262626;letter-spacing:-0.203px;">17</span>
<div style="left:26px;top:626px;width:1281px;height:1px;background:#d4d4d4;"></div>
<div style="left:0px;top:626px;width:25px;height:1px;background:#c4c4c4;"></div>
<span style="left:6.15px;top:609.59px;font-size:12.5px;line-height:16.5px;color:#262626;letter-spacing:-0.203px;">18</span>
<div style="left:26px;top:646px;width:1281px;height:1px;background:#d4d4d4;"></div>
<div style="left:0px;top:646px;width:25px;height:1px;background:#c4c4c4;"></div>
<span style="left:6.15px;top:629.59px;font-size:12.5px;line-height:16.5px;color:#262626;letter-spacing:-0.203px;">19</span>
<div style="left:26px;top:666px;width:1281px;height:1px;background:#d4d4d4;"></div>
<div style="left:0px;top:666px;width:25px;height:1px;background:#c4c4c4;"></div>
<span style="left:6.15px;top:649.59px;font-size:12.5px;line-height:16.5px;color:#262626;letter-spacing:-0.203px;">20</span>
<div style="left:26px;top:686px;width:1281px;height:1px;background:#d4d4d4;"></div>
<div style="left:0px;top:686px;width:25px;height:1px;background:#c4c4c4;"></div>
<span style="left:6.15px;top:669.59px;font-size:12.5px;line-height:16.5px;color:#262626;letter-spacing:-0.203px;">21</span>
<div style="left:26px;top:706px;width:1281px;height:1px;background:#d4d4d4;"></div>
<div style="left:0px;top:706px;width:25px;height:1px;background:#c4c4c4;"></div>
<span style="left:6.15px;top:689.59px;font-size:12.5px;line-height:16.5px;color:#262626;letter-spacing:-0.203px;">22</span>
<div style="left:26px;top:726px;width:1281px;height:1px;background:#d4d4d4;"></div>
<div style="left:0px;top:726px;width:25px;height:1px;background:#c4c4c4;"></div>
<span style="left:6.15px;top:709.59px;font-size:12.5px;line-height:16.5px;color:#262626;letter-spacing:-0.203px;">23</span>
<div style="left:26px;top:746px;width:1281px;height:1px;background:#d4d4d4;"></div>
<div style="left:0px;top:746px;width:25px;height:1px;background:#c4c4c4;"></div>
<span style="left:6.15px;top:729.59px;font-size:12.5px;line-height:16.5px;color:#262626;letter-spacing:-0.203px;">24</span>
<div style="left:26px;top:766px;width:1281px;height:1px;background:#d4d4d4;"></div>
<div style="left:0px;top:766px;width:25px;height:1px;background:#c4c4c4;"></div>
<span style="left:6.15px;top:749.59px;font-size:12.5px;line-height:16.5px;color:#262626;letter-spacing:-0.203px;">25</span>
<div style="left:26px;top:786px;width:1281px;height:1px;background:#d4d4d4;"></div>
<div style="left:0px;top:786px;width:25px;height:1px;background:#c4c4c4;"></div>
<span style="left:6.15px;top:769.59px;font-size:12.5px;line-height:16.5px;color:#262626;letter-spacing:-0.203px;">26</span>
<div style="left:26px;top:806px;width:1281px;height:1px;background:#d4d4d4;"></div>
<div style="left:0px;top:806px;width:25px;height:1px;background:#c4c4c4;"></div>
<span style="left:6.15px;top:789.59px;font-size:12.5px;line-height:16.5px;color:#262626;letter-spacing:-0.203px;">27</span>
<div style="left:26px;top:267px;width:1281px;height:19px;background:#4472c4;"></div>
<div style="left:26px;top:286px;width:1281px;height:1px;background:#8ea9db;"></div>
<div style="left:26px;top:287px;width:1281px;height:19px;background:#d9e1f2;"></div>
<div style="left:26px;top:327px;width:1281px;height:19px;background:#d9e1f2;"></div>
<div style="left:26px;top:306px;width:1281px;height:1px;background:#8ea9db;"></div>
<div style="left:26px;top:326px;width:1281px;height:1px;background:#8ea9db;"></div>
<div style="left:26px;top:346px;width:1281px;height:1px;background:#8ea9db;"></div>
<div style="left:26px;top:366px;width:1281px;height:1px;background:#8ea9db;"></div>
<span style="left:29.00px;top:268.85px;font-size:13px;line-height:17px;color:#fff;font-weight:700;letter-spacing:-0.190px;">First Name</span>
<span style="left:117.80px;top:268.85px;font-size:13px;line-height:17px;color:#fff;font-weight:700;letter-spacing:-0.383px;">Last Name</span>
<span style="left:203.80px;top:268.85px;font-size:13px;line-height:17px;color:#fff;font-weight:700;letter-spacing:-0.070px;">Valid From Date</span>
<span style="left:324.50px;top:268.85px;font-size:13px;line-height:17px;color:#fff;font-weight:700;letter-spacing:-0.259px;">Expiry Date</span>
<span style="left:416.50px;top:268.85px;font-size:13px;line-height:17px;color:#fff;font-weight:700;letter-spacing:-0.257px;">PIN</span>
<span style="left:480.50px;top:268.85px;font-size:13px;line-height:17px;color:#fff;font-weight:700;letter-spacing:0.067px;">Verification Pin</span>
<span style="left:598.80px;top:268.85px;font-size:13px;line-height:17px;color:#fff;font-weight:700;letter-spacing:-0.431px;">Is Barred</span>
<span style="left:674.50px;top:268.85px;font-size:13px;line-height:17px;color:#fff;font-weight:700;letter-spacing:-0.233px;">Exempt From Lockdown</span>
<span style="left:843.50px;top:268.85px;font-size:13px;line-height:17px;color:#fff;font-weight:700;letter-spacing:-0.324px;">Small Custom 1</span>
<span style="left:959.20px;top:268.85px;font-size:13px;line-height:17px;color:#fff;font-weight:700;letter-spacing:-0.295px;">Small Custom 2</span>
<span style="left:1075.80px;top:268.85px;font-size:13px;line-height:17px;color:#fff;font-weight:700;letter-spacing:-0.454px;">Large Custom 1</span>
<span style="left:1190.80px;top:268.85px;font-size:13px;line-height:17px;color:#fff;font-weight:700;letter-spacing:-0.425px;">Large Custom 2</span>
<span style="left:1305.20px;top:268.85px;font-size:13px;line-height:17px;color:#fff;font-weight:700;">L</span>
<div style="left:97px;top:268px;width:17px;height:17px;background:linear-gradient(#ffffff,#eef1f6);border:1px solid #aeaba6;box-sizing:border-box;"><svg style="left:3.900px;top:5.900px" width="8" height="5" viewBox="0 0 8 5"><path d="M.2 .3h7.200l-3.600 4z" fill="#565656"/></svg></div>
<div style="left:183px;top:268px;width:17px;height:17px;background:linear-gradient(#ffffff,#eef1f6);border:1px solid #aeaba6;box-sizing:border-box;"><svg style="left:3.900px;top:5.900px" width="8" height="5" viewBox="0 0 8 5"><path d="M.2 .3h7.200l-3.600 4z" fill="#565656"/></svg></div>
<div style="left:304px;top:268px;width:17px;height:17px;background:linear-gradient(#ffffff,#eef1f6);border:1px solid #aeaba6;box-sizing:border-box;"><svg style="left:3.900px;top:5.900px" width="8" height="5" viewBox="0 0 8 5"><path d="M.2 .3h7.200l-3.600 4z" fill="#565656"/></svg></div>
<div style="left:396px;top:268px;width:17px;height:17px;background:linear-gradient(#e1e5ec,#dde1e8);border:1px solid #9e9e9e;box-sizing:border-box;"><svg style="left:3.900px;top:5.900px" width="8" height="5" viewBox="0 0 8 5"><path d="M.2 .3h7.200l-3.600 4z" fill="#565656"/></svg></div>
<div style="left:460px;top:268px;width:17px;height:17px;background:linear-gradient(#ffffff,#eef1f6);border:1px solid #aeaba6;box-sizing:border-box;"><svg style="left:3.900px;top:5.900px" width="8" height="5" viewBox="0 0 8 5"><path d="M.2 .3h7.200l-3.600 4z" fill="#565656"/></svg></div>
<div style="left:578px;top:268px;width:17px;height:17px;background:linear-gradient(#ffffff,#eef1f6);border:1px solid #aeaba6;box-sizing:border-box;"><svg style="left:3.900px;top:5.900px" width="8" height="5" viewBox="0 0 8 5"><path d="M.2 .3h7.200l-3.600 4z" fill="#565656"/></svg></div>
<div style="left:654px;top:268px;width:17px;height:17px;background:linear-gradient(#ffffff,#eef1f6);border:1px solid #aeaba6;box-sizing:border-box;"><svg style="left:3.900px;top:5.900px" width="8" height="5" viewBox="0 0 8 5"><path d="M.2 .3h7.200l-3.600 4z" fill="#565656"/></svg></div>
<div style="left:823px;top:268px;width:17px;height:17px;background:linear-gradient(#ffffff,#eef1f6);border:1px solid #aeaba6;box-sizing:border-box;"><svg style="left:3.900px;top:5.900px" width="8" height="5" viewBox="0 0 8 5"><path d="M.2 .3h7.200l-3.600 4z" fill="#565656"/></svg></div>
<div style="left:939px;top:268px;width:17px;height:17px;background:linear-gradient(#ffffff,#eef1f6);border:1px solid #aeaba6;box-sizing:border-box;"><svg style="left:3.900px;top:5.900px" width="8" height="5" viewBox="0 0 8 5"><path d="M.2 .3h7.200l-3.600 4z" fill="#565656"/></svg></div>
<div style="left:1055px;top:268px;width:17px;height:17px;background:linear-gradient(#ffffff,#eef1f6);border:1px solid #aeaba6;box-sizing:border-box;"><svg style="left:3.900px;top:5.900px" width="8" height="5" viewBox="0 0 8 5"><path d="M.2 .3h7.200l-3.600 4z" fill="#565656"/></svg></div>
<div style="left:1170px;top:268px;width:17px;height:17px;background:linear-gradient(#ffffff,#eef1f6);border:1px solid #aeaba6;box-sizing:border-box;"><svg style="left:3.900px;top:5.900px" width="8" height="5" viewBox="0 0 8 5"><path d="M.2 .3h7.200l-3.600 4z" fill="#565656"/></svg></div>
<div style="left:1285px;top:268px;width:17px;height:17px;background:linear-gradient(#ffffff,#eef1f6);border:1px solid #aeaba6;box-sizing:border-box;"><svg style="left:3.900px;top:5.900px" width="8" height="5" viewBox="0 0 8 5"><path d="M.2 .3h7.200l-3.600 4z" fill="#565656"/></svg></div>
<span style="left:28.30px;top:289.25px;font-size:13px;line-height:17px;color:#111;letter-spacing:0.055px;">Dean</span>
<span style="left:28.30px;top:309.25px;font-size:13px;line-height:17px;color:#111;letter-spacing:0.270px;">Lewis</span>
<span style="left:28.30px;top:329.25px;font-size:13px;line-height:17px;color:#111;letter-spacing:-0.190px;">Joe</span>
<span style="left:28.30px;top:349.25px;font-size:13px;line-height:17px;color:#111;letter-spacing:-0.326px;">Jane</span>
<span style="left:117.30px;top:289.25px;font-size:13px;line-height:17px;color:#111;letter-spacing:0.208px;">Kern</span>
<span style="left:117.30px;top:309.25px;font-size:13px;line-height:17px;color:#111;letter-spacing:-0.464px;">B-C</span>
<span style="left:117.30px;top:329.25px;font-size:13px;line-height:17px;color:#111;letter-spacing:0.394px;">Blogs</span>
<span style="left:117.30px;top:349.25px;font-size:13px;line-height:17px;color:#111;letter-spacing:0.247px;">Doe</span>
<span style="left:419.20px;top:289.25px;font-size:13px;line-height:17px;color:#111;letter-spacing:-0.343px;">12345678</span>
<span style="left:564.80px;top:289.25px;font-size:13px;line-height:17px;color:#111;letter-spacing:-0.355px;">1234</span>
<span style="left:416.30px;top:309.25px;font-size:13px;line-height:17px;color:#111;letter-spacing:0.276px;">N.A</span>
<span style="left:480.30px;top:309.25px;font-size:13px;line-height:17px;color:#111;letter-spacing:0.276px;">N.A</span>
<span style="left:416.30px;top:329.25px;font-size:13px;line-height:17px;color:#111;letter-spacing:0.276px;">N.A</span>
<span style="left:480.30px;top:329.25px;font-size:13px;line-height:17px;color:#111;letter-spacing:0.276px;">N.A</span>
<span style="left:416.30px;top:349.25px;font-size:13px;line-height:17px;color:#111;letter-spacing:0.276px;">N.A</span>
<span style="left:480.30px;top:349.25px;font-size:13px;line-height:17px;color:#111;letter-spacing:0.276px;">N.A</span>
<span style="left:616.20px;top:289.25px;font-size:13px;line-height:17px;color:#111;letter-spacing:-1.134px;">FALSE</span>
<span style="left:738.70px;top:289.25px;font-size:13px;line-height:17px;color:#111;letter-spacing:-1.134px;">FALSE</span>
<span style="left:616.20px;top:309.25px;font-size:13px;line-height:17px;color:#111;letter-spacing:-1.134px;">FALSE</span>
<span style="left:738.70px;top:309.25px;font-size:13px;line-height:17px;color:#111;letter-spacing:-1.134px;">FALSE</span>
<span style="left:616.20px;top:329.25px;font-size:13px;line-height:17px;color:#111;letter-spacing:-1.134px;">FALSE</span>
<span style="left:738.70px;top:329.25px;font-size:13px;line-height:17px;color:#111;letter-spacing:-1.134px;">FALSE</span>
<span style="left:616.20px;top:349.25px;font-size:13px;line-height:17px;color:#111;letter-spacing:-1.134px;">FALSE</span>
<span style="left:738.70px;top:349.25px;font-size:13px;line-height:17px;color:#111;letter-spacing:-1.134px;">FALSE</span>
<div style="left:670px;top:485px;width:172px;height:23px;border:2px solid #217346;box-sizing:border-box;"></div>
<div style="left:837px;top:503px;width:7px;height:7px;background:#fff;"></div>
<div style="left:838px;top:504px;width:5px;height:5px;background:#217346;"></div>
<div style="left:145px;top:285px;width:268px;height:441px;background:#fff;border:1px solid #c6c6c6;box-sizing:border-box;box-shadow:1px 2px 4px rgba(0,0,0,.26);"></div>
<div style="left:146px;top:715px;width:266px;height:10px;background:linear-gradient(#ffffff,#f6f6f6 50%,#e9e9e9);"></div>
<div style="left:146px;top:715px;width:266px;height:1px;background:#dde6f0;"></div>
<div style="left:407px;top:718px;width:2px;height:2px;background:#8f8f8f;"></div>
<div style="left:407px;top:722px;width:2px;height:2px;background:#8f8f8f;"></div>
<div style="left:403px;top:722px;width:2px;height:2px;background:#8f8f8f;"></div>
<svg style="left:145px;top:285px" width="268" height="200" viewBox="145 285 268 200"><path d="M158.60 297.50L161.60 291.80L164.60 297.50M159.70 295.50H163.50" fill="none" stroke="#1e88d4" stroke-width="1.400" stroke-linejoin="bevel"/><path d="M158.40 300.80H163.60L158.50 306.00H163.90" fill="none" stroke="#333" stroke-width="1.250" stroke-linejoin="bevel"/><path d="M170.6 291.3V306.5M167.2 303.0L170.6 306.5L174.0 303.0" fill="none" stroke="#3b3b3b" stroke-width="1.100"/><path d="M158.40 319.80H163.60L158.50 325.00H163.90" fill="none" stroke="#333" stroke-width="1.250" stroke-linejoin="bevel"/><path d="M158.60 334.60L161.60 328.90L164.60 334.60M159.70 332.60H163.50" fill="none" stroke="#1e88d4" stroke-width="1.400" stroke-linejoin="bevel"/><path d="M170.6 319.3V334.5M167.2 331.0L170.6 334.5L174.0 331.0" fill="none" stroke="#3b3b3b" stroke-width="1.100"/><path d="M158.800 401.600h12.800l-4.800 5.800v5.500l-3.200 2.400v-7.900z" fill="none" stroke="#b9b9b9" stroke-width="1.100" stroke-linejoin="round"/><path d="M168 410.300l6 6M174 410.300l-6 6" stroke="#b4b4b4" stroke-width="1.250"/><path d="M399.500 349.4l4.600 4.300-4.600 4.300" fill="none" stroke="#444" stroke-width="1.100"/><path d="M399.500 376.5l4.600 4.300-4.600 4.300" fill="none" stroke="#a3a3a3" stroke-width="1.100"/><path d="M399.500 431.7l4.600 4.300-4.600 4.300" fill="none" stroke="#a3a3a3" stroke-width="1.100"/><path d="M399.500 455.5l4.600 4.300-4.600 4.300" fill="none" stroke="#444" stroke-width="1.100"/></svg>
<span style="left:182.80px;top:292.14px;font-size:12px;line-height:16px;color:#1f1f1f;letter-spacing:-0.134px;"><u>S</u>ort Oldest to Newest</span>
<span style="left:183.40px;top:319.94px;font-size:12px;line-height:16px;color:#1f1f1f;letter-spacing:-0.163px;">S<u>o</u>rt Newest to Oldest</span>
<span style="left:175.40px;top:345.64px;font-size:12px;line-height:16px;color:#1f1f1f;letter-spacing:-0.110px;">Sor<u>t</u> by Color</span>
<span style="left:175.60px;top:372.74px;font-size:12px;line-height:16px;color:#a3a3a3;letter-spacing:-0.440px;">Sheet <u>V</u>iew</span>
<span style="left:183.60px;top:401.84px;font-size:12px;line-height:16px;color:#a3a3a3;letter-spacing:-0.196px;"><u>C</u>lear Filter From &quot;Expiry Date&quot;</span>
<span style="left:175.60px;top:428.04px;font-size:12px;line-height:16px;color:#a3a3a3;letter-spacing:-0.099px;">F<u>i</u>lter by Color</span>
<span style="left:175.60px;top:451.74px;font-size:12px;line-height:16px;color:#1f1f1f;letter-spacing:-0.363px;">Date <u>F</u>ilters</span>
<div style="left:178px;top:367px;width:234px;height:1px;background:#e1e1e1;"></div>
<div style="left:178px;top:394px;width:234px;height:1px;background:#e1e1e1;"></div>
<div style="left:178px;top:473px;width:234px;height:1px;background:#e1e1e1;"></div>
<div style="left:176px;top:480px;width:230px;height:22px;background:#fff;border:1px solid #ababab;box-sizing:border-box;"></div>
<span style="left:178.40px;top:481.74px;font-size:12px;line-height:16px;color:#6e6e6e;letter-spacing:-0.282px;">Search (All)</span>
<svg style="left:375px;top:481px;" width="18" height="19" viewBox="0 0 18 19"><g fill="none" stroke="#555" stroke-width="1.100"><circle cx="10.500" cy="6.500" r="4.800"/><path d="M7.200 10L1.500 16.800"/></g></svg>
<div style="left:392px;top:481px;width:14px;height:20px;background:#dcdcdc;border:1px solid #b9b9b9;box-sizing:border-box;"></div>
<svg style="left:394.5px;top:488.5px;" width="9" height="6" viewBox="0 0 9 6"><path d="M1 1l3.500 3.500L8 1" fill="none" stroke="#444" stroke-width="1.100"/></svg>
<div style="left:176px;top:505px;width:230px;height:169px;background:#fff;border:1px solid #e3e3e3;box-sizing:border-box;"></div>
<div style="left:211px;top:578px;width:28px;height:18px;background:#eeeeee;"></div>
<svg style="left:176px;top:505px" width="230" height="168" viewBox="176 505 230 168"><path d="M189.500 530v-13.500h9" stroke="#7d7d7d" stroke-width="1" stroke-dasharray="1 1" fill="none"/><path d="M189.500 539v85.500h9" stroke="#7d7d7d" stroke-width="1" stroke-dasharray="1 1" fill="none"/><path d="M194 534.500h4" stroke="#7d7d7d" stroke-width="1" stroke-dasharray="1 1" fill="none"/><path d="M194 588.500h4" stroke="#7d7d7d" stroke-width="1" stroke-dasharray="1 1" fill="none"/><path d="M194 606.500h4" stroke="#7d7d7d" stroke-width="1" stroke-dasharray="1 1" fill="none"/><path d="M208.500 542v5" stroke="#7d7d7d" stroke-width="1" stroke-dasharray="1 1" fill="none"/><path d="M213 552.500h4" stroke="#7d7d7d" stroke-width="1" stroke-dasharray="1 1" fill="none"/><path d="M227.500 560v10.500h9" stroke="#7d7d7d" stroke-width="1" stroke-dasharray="1 1" fill="none"/><defs><linearGradient id="eg" x1="0" y1="0" x2="0" y2="1"><stop offset="0" stop-color="#ffffff"/><stop offset=".55" stop-color="#f2f2f2"/><stop offset="1" stop-color="#d2d2d2"/></linearGradient></defs><rect x="185.5" y="530.5" width="8" height="8" rx="1.200" fill="url(#eg)" stroke="#9b9b9b" stroke-width="1"/><path d="M187.0 534.5h5" stroke="#3c55a5" stroke-width="1"/><rect x="204.5" y="548.5" width="8" height="8" rx="1.200" fill="url(#eg)" stroke="#9b9b9b" stroke-width="1"/><path d="M206.0 552.5h5" stroke="#3c55a5" stroke-width="1"/><rect x="185.5" y="584.5" width="8" height="8" rx="1.200" fill="url(#eg)" stroke="#9b9b9b" stroke-width="1"/><path d="M187.0 588.5h5" stroke="#3c55a5" stroke-width="1"/><path d="M189.5 586.0v5" stroke="#3c55a5" stroke-width="1"/><rect x="185.5" y="602.5" width="8" height="8" rx="1.200" fill="url(#eg)" stroke="#9b9b9b" stroke-width="1"/><path d="M187.0 606.5h5" stroke="#3c55a5" stroke-width="1"/><path d="M189.5 604.0v5" stroke="#3c55a5" stroke-width="1"/><rect x="199.5" y="509.5" width="10" height="10" fill="#fff" stroke="#5f5f5f" stroke-width="1"/><rect x="201.5" y="511.5" width="6" height="6" fill="#000"/><rect x="199.5" y="527.5" width="10" height="10" fill="#fff" stroke="#5f5f5f" stroke-width="1"/><path d="M201.1 532.6l2.700 2.400 4.100-5.800" fill="none" stroke="#000" stroke-width="2.200"/><rect x="218.5" y="545.5" width="10" height="10" fill="#fff" stroke="#5f5f5f" stroke-width="1"/><path d="M220.1 550.6l2.700 2.400 4.100-5.800" fill="none" stroke="#000" stroke-width="2.200"/><rect x="237.5" y="563.5" width="10" height="10" fill="#fff" stroke="#5f5f5f" stroke-width="1"/><path d="M239.1 568.6l2.700 2.400 4.100-5.800" fill="none" stroke="#000" stroke-width="2.200"/><rect x="199.5" y="581.5" width="10" height="10" fill="#fff" stroke="#5f5f5f" stroke-width="1"/><rect x="199.5" y="599.5" width="10" height="10" fill="#fff" stroke="#5f5f5f" stroke-width="1"/><rect x="199.5" y="617.5" width="10" height="10" fill="#fff" stroke="#5f5f5f" stroke-width="1"/></svg>
<span style="left:213.10px;top:506.74px;font-size:12px;line-height:16px;color:#111;letter-spacing:-0.180px;">(Select All)</span>
<span style="left:213.10px;top:524.74px;font-size:12px;line-height:16px;color:#111;letter-spacing:-0.826px;">2022</span>
<span style="left:232.30px;top:542.74px;font-size:12px;line-height:16px;color:#111;letter-spacing:-0.232px;">December</span>
<span style="left:250.80px;top:560.74px;font-size:12px;line-height:16px;color:#111;letter-spacing:-1.180px;">31</span>
<span style="left:213.10px;top:578.74px;font-size:12px;line-height:16px;color:#111;letter-spacing:-0.826px;">2021</span>
<span style="left:213.10px;top:596.74px;font-size:12px;line-height:16px;color:#111;letter-spacing:-0.826px;">2020</span>
<span style="left:213.10px;top:614.74px;font-size:12px;line-height:16px;color:#111;letter-spacing:-0.305px;">N.A</span>
<div style="left:248px;top:689px;width:73px;height:21px;background:#e1e1e1;border:2px solid #0078d7;box-sizing:border-box;"></div>
<span style="left:277.50px;top:692.64px;font-size:12px;line-height:16px;color:#111;letter-spacing:-1.272px;">OK</span>
<div style="left:332px;top:689px;width:73px;height:21px;background:#e1e1e1;border:1px solid #adadad;box-sizing:border-box;"></div>
<span style="left:351.60px;top:692.64px;font-size:12px;line-height:16px;color:#111;letter-spacing:-0.660px;">Cancel</span>
<svg style="left:150px;top:480px" width="170" height="175" viewBox="150 480 170 175"><path d="M276.0 503.9C273.6 503.0 266.9 499.5 261.5 498.3C256.1 497.1 250.0 496.8 243.7 496.5C237.4 496.2 229.5 496.2 223.6 496.5C217.7 496.8 213.2 497.1 208.0 498.3C202.8 499.5 197.2 501.5 192.4 503.9C187.6 506.3 182.9 509.3 179.0 512.8C175.1 516.3 171.8 520.5 169.0 525.1C166.2 529.8 163.8 535.5 162.3 540.7C160.8 545.9 160.3 551.1 160.0 556.3C159.7 561.5 160.1 566.7 160.7 571.9C161.3 577.1 162.0 582.3 163.4 587.5C164.8 592.7 166.9 597.9 169.0 603.1C171.1 608.3 172.9 614.0 175.7 618.8C178.5 623.6 181.8 628.6 185.7 632.1C189.6 635.6 193.9 638.2 199.1 640.0C204.3 641.8 210.9 642.4 216.9 642.9C222.9 643.4 229.2 643.2 234.8 642.9C240.4 642.6 245.2 642.3 250.4 641.1C255.6 639.9 260.8 637.7 266.0 635.5C271.2 633.3 276.8 630.9 281.6 627.7C286.4 624.5 291.3 620.6 295.0 616.5C298.7 612.4 301.8 607.9 303.9 603.1C306.0 598.3 307.1 593.1 307.9 587.5C308.7 581.9 308.6 575.7 308.8 569.7C309.0 563.8 309.1 557.4 308.8 551.8C308.6 546.2 308.5 541.0 307.3 536.2C306.1 531.4 304.1 527.2 301.7 522.8C299.3 518.3 295.8 513.6 292.8 509.5C289.8 505.4 286.5 501.1 283.8 498.3C281.1 495.5 277.9 493.6 276.7 492.7" fill="none" stroke="#e3191d" stroke-width="3.700" stroke-linecap="round" stroke-linejoin="round"/></svg>
</div></body></html>
